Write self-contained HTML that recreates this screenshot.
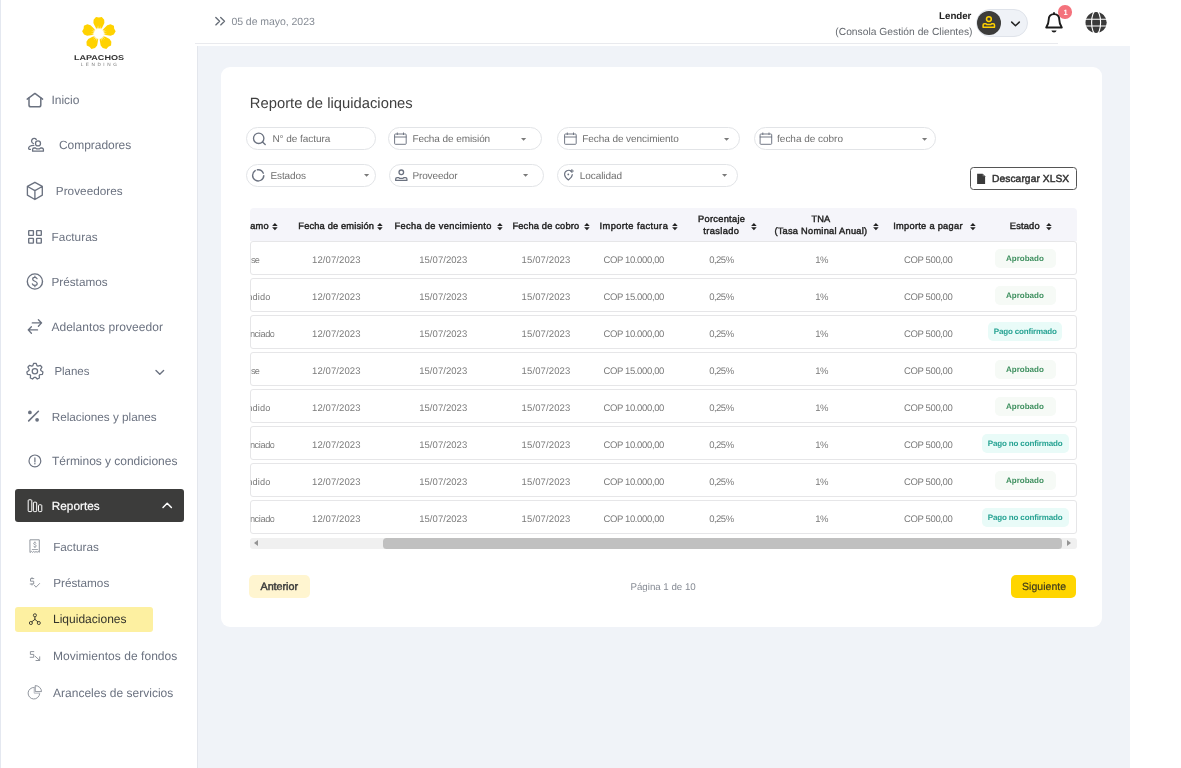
<!DOCTYPE html>
<html lang="es"><head><meta charset="utf-8"><title>Reporte de liquidaciones</title>
<style>
*{box-sizing:border-box;margin:0;padding:0}
html,body{width:1181px;height:768px;overflow:hidden;background:#fff;font-family:"Liberation Sans",sans-serif}
body{position:relative}
.t{position:absolute;white-space:pre;font-family:"Liberation Sans",sans-serif;text-rendering:geometricPrecision}
.a{position:absolute}
.pill{position:absolute;border:1px solid #e2e4e7;border-radius:11px;background:#fff;height:22px}
.row{position:absolute;left:250px;width:827px;height:34px;border:1px solid #e6e6e8;border-radius:3px;background:#fff}
.badge{position:absolute;border-radius:5px;height:19.2px}
svg{position:absolute;overflow:visible}
.tl{position:absolute;left:0;top:0;width:1181px;height:768px;will-change:transform}

</style></head>
<body>
<div class="a" style="left:197px;top:46px;width:933px;height:722px;background:#f0f3f8"></div>
<div class="a" style="left:197px;top:46px;width:1px;height:722px;background:#e3e6ec"></div>
<div class="a" style="left:0;top:0;width:1px;height:768px;background:#e4e8f0"></div>
<div class="a" style="left:195px;top:43px;width:863px;height:1px;background:#e9eaee"></div>
<div class="a" style="left:221px;top:67px;width:881px;height:560px;background:#fff;border-radius:9px"></div>
<div class="a" style="left:15px;top:489px;width:169px;height:33px;background:#3c3c3b;border-radius:3px"></div>
<div class="a" style="left:15px;top:607px;width:138px;height:25px;background:#fdf0a1;border-radius:3px"></div>
<div class="a" style="left:976px;top:9px;width:52px;height:28px;background:#eff2f7;border:1px solid #dfe3ea;border-radius:14px"></div>
<div class="a" style="left:977.1px;top:10.6px;width:24.3px;height:24.5px;background:#3c3c3a;border-radius:50%"></div>
<div class="a" style="left:1058.3px;top:5.3px;width:13.6px;height:13.6px;background:#f4727c;border-radius:50%"></div>
<div class="pill" style="left:246px;top:127px;width:129.5px;height:23px;border-radius:11.5px"></div>
<div class="pill" style="left:388.4px;top:127px;width:154px;height:23px;border-radius:11.5px"></div>
<div class="pill" style="left:557.4px;top:127px;width:182.4px;height:23px;border-radius:11.5px"></div>
<div class="pill" style="left:754px;top:127px;width:182.4px;height:23px;border-radius:11.5px"></div>
<div class="pill" style="left:246px;top:164px;width:129.5px;height:23px;border-radius:11.5px"></div>
<div class="pill" style="left:388.6px;top:164px;width:155px;height:23px;border-radius:11.5px"></div>
<div class="pill" style="left:556.5px;top:164px;width:181.4px;height:23px;border-radius:11.5px"></div>
<div class="a" style="left:970px;top:167px;width:107px;height:23px;border:1px solid #555;border-radius:3.5px;background:#fff"></div>
<div class="a" style="left:250px;top:208px;width:826.5px;height:33px;background:#f5f5fa;border-radius:4px 4px 0 0"></div>
<div class="row" style="top:241px"></div>
<div class="row" style="top:278px"></div>
<div class="row" style="top:315px"></div>
<div class="row" style="top:352px"></div>
<div class="row" style="top:389px"></div>
<div class="row" style="top:426px"></div>
<div class="row" style="top:463px"></div>
<div class="row" style="top:500px"></div>
<div class="badge" style="left:994.8px;top:248.6px;width:61.2px;background:#f6faf6"></div>
<div class="badge" style="left:994.8px;top:285.6px;width:61.2px;background:#f6faf6"></div>
<div class="badge" style="left:988.2px;top:321.6px;width:74.2px;background:#e9fbf8"></div>
<div class="badge" style="left:994.8px;top:359.6px;width:61.2px;background:#f6faf6"></div>
<div class="badge" style="left:994.8px;top:396.6px;width:61.2px;background:#f6faf6"></div>
<div class="badge" style="left:981.5px;top:433.6px;width:87.5px;background:#e9fbf8"></div>
<div class="badge" style="left:994.8px;top:470.6px;width:61.2px;background:#f6faf6"></div>
<div class="badge" style="left:981.5px;top:507.6px;width:87.5px;background:#e9fbf8"></div>
<div class="a" style="left:250px;top:537.6px;width:826.5px;height:11.4px;background:#f0f0f0;border-radius:3px"></div>
<div class="a" style="left:382.9px;top:537.6px;width:678.9px;height:11.4px;background:#c0c0c0;border-radius:3.5px"></div>
<div class="a" style="left:254.4px;top:540px;width:0;height:0;border-top:3.3px solid transparent;border-bottom:3.3px solid transparent;border-right:4.5px solid #949494"></div>
<div class="a" style="left:1066.9px;top:540px;width:0;height:0;border-top:3.3px solid transparent;border-bottom:3.3px solid transparent;border-left:4.5px solid #949494"></div>
<div class="a" style="left:249.2px;top:574.7px;width:60.8px;height:23.6px;background:#fff5d0;border-radius:5px"></div>
<div class="a" style="left:1011.3px;top:574.7px;width:65.2px;height:23.6px;background:#ffd500;border-radius:5px"></div>
<svg style="left:271.7px;top:222.9px" width="5.8" height="7.2" viewBox="0 0 5.8 7.2"><path d="M2.9 0 L5.7 3 L0.1 3Z M2.9 7.2 L5.7 4.2 L0.1 4.2Z" fill="#222"/></svg>
<svg style="left:377.4px;top:222.9px" width="5.8" height="7.2" viewBox="0 0 5.8 7.2"><path d="M2.9 0 L5.7 3 L0.1 3Z M2.9 7.2 L5.7 4.2 L0.1 4.2Z" fill="#222"/></svg>
<svg style="left:496.9px;top:222.9px" width="5.8" height="7.2" viewBox="0 0 5.8 7.2"><path d="M2.9 0 L5.7 3 L0.1 3Z M2.9 7.2 L5.7 4.2 L0.1 4.2Z" fill="#222"/></svg>
<svg style="left:584.2px;top:222.9px" width="5.8" height="7.2" viewBox="0 0 5.8 7.2"><path d="M2.9 0 L5.7 3 L0.1 3Z M2.9 7.2 L5.7 4.2 L0.1 4.2Z" fill="#222"/></svg>
<svg style="left:672.4px;top:222.9px" width="5.8" height="7.2" viewBox="0 0 5.8 7.2"><path d="M2.9 0 L5.7 3 L0.1 3Z M2.9 7.2 L5.7 4.2 L0.1 4.2Z" fill="#222"/></svg>
<svg style="left:751.1px;top:222.9px" width="5.8" height="7.2" viewBox="0 0 5.8 7.2"><path d="M2.9 0 L5.7 3 L0.1 3Z M2.9 7.2 L5.7 4.2 L0.1 4.2Z" fill="#222"/></svg>
<svg style="left:872.9px;top:222.9px" width="5.8" height="7.2" viewBox="0 0 5.8 7.2"><path d="M2.9 0 L5.7 3 L0.1 3Z M2.9 7.2 L5.7 4.2 L0.1 4.2Z" fill="#222"/></svg>
<svg style="left:970.0px;top:222.9px" width="5.8" height="7.2" viewBox="0 0 5.8 7.2"><path d="M2.9 0 L5.7 3 L0.1 3Z M2.9 7.2 L5.7 4.2 L0.1 4.2Z" fill="#222"/></svg>
<svg style="left:1046.3px;top:222.9px" width="5.8" height="7.2" viewBox="0 0 5.8 7.2"><path d="M2.9 0 L5.7 3 L0.1 3Z M2.9 7.2 L5.7 4.2 L0.1 4.2Z" fill="#222"/></svg>
<svg style="left:521.4px;top:137.9px" width="5.2" height="2.8" viewBox="0 0 5.2 2.8"><path d="M0 0 L5.2 0 L2.6 2.8Z" fill="#7a7a7a"/></svg>
<svg style="left:724.0px;top:137.9px" width="5.2" height="2.8" viewBox="0 0 5.2 2.8"><path d="M0 0 L5.2 0 L2.6 2.8Z" fill="#7a7a7a"/></svg>
<svg style="left:921.9px;top:137.9px" width="5.2" height="2.8" viewBox="0 0 5.2 2.8"><path d="M0 0 L5.2 0 L2.6 2.8Z" fill="#7a7a7a"/></svg>
<svg style="left:363.9px;top:174.3px" width="5.2" height="2.8" viewBox="0 0 5.2 2.8"><path d="M0 0 L5.2 0 L2.6 2.8Z" fill="#7a7a7a"/></svg>
<svg style="left:522.7px;top:174.3px" width="5.2" height="2.8" viewBox="0 0 5.2 2.8"><path d="M0 0 L5.2 0 L2.6 2.8Z" fill="#7a7a7a"/></svg>
<svg style="left:722.0px;top:174.3px" width="5.2" height="2.8" viewBox="0 0 5.2 2.8"><path d="M0 0 L5.2 0 L2.6 2.8Z" fill="#7a7a7a"/></svg>
<svg width="1181" height="768" viewBox="0 0 1181 768" style="left:0;top:0;pointer-events:none">
<polygon points="97.30,31.20 93.40,23.10 93.60,19.80 96.00,17.00 98.90,17.60 101.80,17.00 104.20,19.80 104.40,23.10 100.50,31.20" fill="#ffd200"/>
<polygon points="100.78,31.41 107.28,25.19 110.48,24.36 113.89,25.78 114.21,28.72 115.68,31.30 113.76,34.45 110.68,35.66 101.77,34.45" fill="#ffd200"/>
<polygon points="101.66,34.78 109.58,39.04 111.36,41.83 111.06,45.51 108.36,46.73 106.37,48.92 102.78,48.06 100.68,45.51 99.08,36.66" fill="#ffd200"/>
<polygon points="98.72,36.66 97.12,45.51 95.02,48.06 91.43,48.92 89.44,46.73 86.74,45.51 86.44,41.83 88.22,39.04 96.14,34.78" fill="#ffd200"/>
<polygon points="96.03,34.45 87.12,35.66 84.04,34.45 82.12,31.30 83.59,28.72 83.91,25.78 87.32,24.36 90.52,25.19 97.02,31.41" fill="#ffd200"/>
<defs><radialGradient id="lg"><stop offset="0" stop-color="#fff"/><stop offset="0.7" stop-color="#fff"/><stop offset="1" stop-color="#fff" stop-opacity="0"/></radialGradient></defs>
<circle cx="98.9" cy="33.7" r="6.2" fill="url(#lg)"/>
<polygon points="98.90,25.30 99.35,30.13 100.99,25.56 100.23,30.35 102.95,26.34 101.02,30.79 104.65,27.58 101.67,31.41 105.99,29.20 102.16,32.17 106.89,31.10 102.44,33.03 107.28,33.17 102.49,33.93 107.15,35.27 102.32,34.81 106.50,37.28 101.94,35.63 105.37,39.05 101.36,36.32 103.84,40.50 100.63,36.85 101.99,41.51 99.80,37.19 99.95,42.03 98.90,37.30 97.85,42.03 98.00,37.19 95.81,41.51 97.17,36.85 93.96,40.50 96.44,36.32 92.43,39.05 95.86,35.63 91.30,37.28 95.48,34.81 90.65,35.27 95.31,33.93 90.52,33.17 95.36,33.03 90.91,31.10 95.64,32.17 91.81,29.20 96.13,31.41 93.15,27.58 96.78,30.79 94.85,26.34 97.57,30.35 96.81,25.56 98.45,30.13" fill="#fff" opacity="0.8"/>
<path d="M27.2 99.1 L34.9 93.4 L42.6 99.1" fill="none" stroke="#6b7280" stroke-width="1.5" stroke-linecap="round" stroke-linejoin="round" />
<path d="M29.0 97.9 V104.9 a1.9 1.9 0 0 0 1.9 1.9 h8.0 a1.9 1.9 0 0 0 1.9 -1.9 V97.9" fill="none" stroke="#6b7280" stroke-width="1.5" stroke-linecap="round" stroke-linejoin="round" />
<circle cx="38" cy="143.4" r="2.5" fill="none" stroke="#6b7280" stroke-width="1.3"/>
<path d="M32.6 151.2 V149.6 a1.6 1.6 0 0 1 1.6 -1.6 h1.2 l1 .8 h3.2 l1 -.8 h1.2 a1.6 1.6 0 0 1 1.6 1.6 V151.2 Z" fill="none" stroke="#6b7280" stroke-width="1.3" stroke-linecap="round" stroke-linejoin="round" />
<path d="M36.3 139.5 A2.6 2.6 0 1 0 33.4 143.5" fill="none" stroke="#6b7280" stroke-width="1.3" stroke-linecap="round" stroke-linejoin="round" />
<path d="M33.8 145.4 C30.6 145.3 28.4 146.8 28.6 148.4 C28.7 149.3 29.6 149.6 30.4 149.3" fill="none" stroke="#6b7280" stroke-width="1.3" stroke-linecap="round" stroke-linejoin="round" />
<path d="M34.9 182.3 L42.3 186.4 V195.2 L34.9 199.5 L27.4 195.2 V186.4 Z M27.6 186.5 L34.9 190.6 L42.2 186.5 M34.9 190.6 V199.3" fill="none" stroke="#6b7280" stroke-width="1.35" stroke-linecap="round" stroke-linejoin="round" />
<rect x="28.7" y="230.6" width="4.7" height="4.7" rx="0.4" fill="none" stroke="#6b7280" stroke-width="1.35"/>
<rect x="36.6" y="230.6" width="4.7" height="4.7" rx="0.4" fill="none" stroke="#6b7280" stroke-width="1.35"/>
<rect x="28.7" y="238.4" width="4.7" height="4.7" rx="0.4" fill="none" stroke="#6b7280" stroke-width="1.35"/>
<rect x="36.6" y="238.4" width="4.7" height="4.7" rx="0.4" fill="none" stroke="#6b7280" stroke-width="1.35"/>
<circle cx="34.9" cy="281.5" r="7.6" fill="none" stroke="#6b7280" stroke-width="1.4"/>
<path d="M37.1 278.7 C36.6 277.7 35.7 277.4 34.8 277.4 C33.5 277.4 32.7 278.2 32.7 279.2 C32.7 281.6 37.2 280.9 37.2 283.5 C37.2 284.6 36.2 285.4 34.9 285.4 C33.8 285.4 32.8 284.9 32.4 283.9 M34.9 276.2 V277.4 M34.9 285.4 V286.7" fill="none" stroke="#6b7280" stroke-width="1.25" stroke-linecap="round" stroke-linejoin="round" />
<path d="M32.3 322.9 H41.2 M38.4 319.7 L41.6 322.9 L38.4 326.2" fill="none" stroke="#6b7280" stroke-width="1.35" stroke-linecap="round" stroke-linejoin="round" />
<path d="M37.5 329.9 H28.6 M31.4 326.7 L28.2 329.9 L31.4 333.2" fill="none" stroke="#6b7280" stroke-width="1.35" stroke-linecap="round" stroke-linejoin="round" />
<path d="M32.80 365.68 L33.68 363.29 L36.12 363.29 L37.00 365.68 L37.98 366.15 L40.40 365.36 L41.92 367.26 L40.60 369.44 L40.85 370.50 L42.98 371.90 L42.44 374.27 L39.91 374.60 L39.23 375.45 L39.47 377.99 L37.28 379.04 L35.45 377.28 L34.35 377.28 L32.52 379.04 L30.33 377.99 L30.57 375.45 L29.89 374.60 L27.36 374.27 L26.82 371.90 L28.95 370.50 L29.20 369.44 L27.88 367.26 L29.40 365.36 L31.82 366.15 Z" fill="none" stroke="#6b7280" stroke-width="1.25" stroke-linecap="round" stroke-linejoin="round" />
<circle cx="34.9" cy="371.3" r="2.7" fill="none" stroke="#6b7280" stroke-width="1.25"/>
<path d="M156 370.6 L159.8 374.3 L163.6 370.6" fill="none" stroke="#6b7280" stroke-width="1.4" stroke-linecap="round" stroke-linejoin="round" />
<path d="M28.7 420.9 L38.4 411.3" fill="none" stroke="#6b7280" stroke-width="1.6" stroke-linecap="round" stroke-linejoin="round" />
<circle cx="29.9" cy="412.4" r="1.85" fill="#6b7280" stroke="none" stroke-width="0"/>
<circle cx="37.1" cy="419.8" r="1.85" fill="#6b7280" stroke="none" stroke-width="0"/>
<circle cx="34.9" cy="460.9" r="5.9" fill="none" stroke="#6b7280" stroke-width="1.2"/>
<path d="M34.9 457.9 V462" fill="none" stroke="#6b7280" stroke-width="1.2" stroke-linecap="round" stroke-linejoin="round" />
<circle cx="34.9" cy="463.7" r="0.75" fill="#6b7280" stroke="none" stroke-width="0"/>
<rect x="28.2" y="499.8" width="3.6" height="11.8" rx="0.8" fill="none" stroke="#fff" stroke-width="1"/>
<rect x="33.4" y="502.2" width="3.3" height="9.4" rx="0.8" fill="none" stroke="#fff" stroke-width="1"/>
<rect x="38.5" y="504.8" width="3.3" height="6.8" rx="0.8" fill="none" stroke="#fff" stroke-width="1"/>
<path d="M163 507.5 L167.2 503.3 L171.4 507.5" fill="none" stroke="#fff" stroke-width="1.5" stroke-linecap="round" stroke-linejoin="round" />
<path d="M30.3 539.8 H39.3 V552.3 L38.2 551.4 L37.1 552.4 L36 551.4 L34.9 552.4 L33.7 551.4 L32.6 552.4 L31.5 551.4 L30.3 552.3 Z" fill="none" stroke="#8b9099" stroke-width="0.95" stroke-linecap="round" stroke-linejoin="round" />
<path d="M36.1 543.2 C35.6 542.4 33.5 542.3 33.6 543.6 C33.7 545 36.3 544.5 36.3 545.9 C36.3 547.2 34 547.2 33.5 546.2 M34.9 541.9 V542.5 M34.9 547 V547.6" fill="none" stroke="#8b9099" stroke-width="0.8" stroke-linecap="round" stroke-linejoin="round" />
<path d="M32.3 549.5 H37.5" fill="none" stroke="#8b9099" stroke-width="0.8" stroke-linecap="round" stroke-linejoin="round" />
<path d="M33.8 578.6 H30.5 V581.2 H33.7 V584 H30.2 M32 577.6 V578.6 M32 584 V585" fill="none" stroke="#8b9099" stroke-width="0.95" stroke-linecap="round" stroke-linejoin="round" />
<path d="M34.4 585.3 L36 587.2 L39.6 583.5" fill="none" stroke="#8b9099" stroke-width="0.9" stroke-linecap="round" stroke-linejoin="round" />
<circle cx="34.9" cy="615.3" r="1.55" fill="none" stroke="#3b3a2e" stroke-width="0.9"/>
<circle cx="30.9" cy="623" r="1.55" fill="none" stroke="#3b3a2e" stroke-width="0.9"/>
<circle cx="38.8" cy="623" r="1.55" fill="none" stroke="#3b3a2e" stroke-width="0.9"/>
<path d="M34.9 616.9 V619.4 M34.9 619.4 L31.8 621.8 M34.9 619.4 L37.9 621.8" fill="none" stroke="#3b3a2e" stroke-width="0.95" stroke-linecap="round" stroke-linejoin="round" />
<path d="M33.8 651.6 H30.4 V654.4 H33.7 V657.3 H30.2" fill="none" stroke="#8b9099" stroke-width="0.95" stroke-linecap="round" stroke-linejoin="round" />
<path d="M35 656.1 L39.5 660.3 M36 660.5 H39.7 V656.8" fill="none" stroke="#8b9099" stroke-width="0.95" stroke-linecap="round" stroke-linejoin="round" />
<path d="M34.2 687.4 A5.8 5.8 0 1 0 39.7 693.6" fill="none" stroke="#8b9099" stroke-width="0.95" stroke-linecap="round" stroke-linejoin="round" />
<path d="M34.2 687.6 V693.2 H39.6" fill="none" stroke="#b8bcc2" stroke-width="1.0" stroke-linecap="round" stroke-linejoin="round" />
<path d="M35.6 685.6 A6 6 0 0 1 41.5 691.6 H35.6 Z" fill="none" stroke="#8b9099" stroke-width="0.95" stroke-linecap="round" stroke-linejoin="round" />
<path d="M215.8 17.5 L219.6 21.2 L215.8 24.9 M220.7 17.5 L224.5 21.2 L220.7 24.9" fill="none" stroke="#666d77" stroke-width="1.35" stroke-linecap="round" stroke-linejoin="round" />
<circle cx="988.9" cy="19.1" r="2.4" fill="none" stroke="#ffd200" stroke-width="1.5"/>
<path d="M983.1 27.3 V25.1 a1.3 1.3 0 0 1 1.3 -1.3 h1.6 l.9 .8 h3.8 l.9 -.8 h1.6 a1.3 1.3 0 0 1 1.3 1.3 V27.3 Z" fill="none" stroke="#ffd200" stroke-width="1.5" stroke-linecap="round" stroke-linejoin="round" />
<path d="M1011.7 22.1 L1015.5 25.7 L1019.3 22.1" fill="none" stroke="#222" stroke-width="1.5" stroke-linecap="round" stroke-linejoin="round" />
<path d="M1054 14.1 C1050.2 14.1 1048.7 17 1048.7 19.8 C1048.7 23.6 1047.5 25.6 1046.2 27.5 H1061.8 C1060.5 25.6 1059.3 23.6 1059.3 19.8 C1059.3 17 1057.8 14.1 1054 14.1 Z" fill="none" stroke="#1c1c1c" stroke-width="1.9" stroke-linecap="round" stroke-linejoin="round" />
<path d="M1051.4 30.6 H1056.6 A2.7 2.7 0 0 1 1051.4 30.6 Z" fill="#1c1c1c"/>
<path d="M1054 12.9 V13.6" fill="none" stroke="#1c1c1c" stroke-width="1.9" stroke-linecap="round" stroke-linejoin="round" />
<circle cx="1096.1" cy="22.5" r="10.6" fill="#3a3a3a"/>
<g stroke="#fff" stroke-width="1.15" fill="none"><ellipse cx="1096.1" cy="22.5" rx="4.5" ry="11.799999999999999"/><path d="M1084.5 19.2 H1107.6999999999998 M1084.5 26.0 H1107.6999999999998"/></g>
<circle cx="258.7" cy="138.3" r="5.2" fill="none" stroke="#6b7280" stroke-width="1.35"/>
<path d="M262.5 142 L265.2 144.5" fill="none" stroke="#6b7280" stroke-width="1.4" stroke-linecap="round" stroke-linejoin="round" />
<rect x="394.6" y="134" width="11.6" height="10.3" rx="0.8" fill="none" stroke="#6b7280" stroke-width="0.95"/>
<path d="M394.6 137 H406.20000000000005 M397.3 132.9 V134.6 M403.5 132.9 V134.6" fill="none" stroke="#6b7280" stroke-width="0.95" stroke-linecap="round" stroke-linejoin="round" />
<rect x="564.6" y="134" width="11.6" height="10.3" rx="0.8" fill="none" stroke="#6b7280" stroke-width="0.95"/>
<path d="M564.6 137 H576.2 M567.3000000000001 132.9 V134.6 M573.5 132.9 V134.6" fill="none" stroke="#6b7280" stroke-width="0.95" stroke-linecap="round" stroke-linejoin="round" />
<rect x="760.1" y="134" width="11.6" height="10.3" rx="0.8" fill="none" stroke="#6b7280" stroke-width="0.95"/>
<path d="M760.1 137 H771.7 M762.8000000000001 132.9 V134.6 M769.0 132.9 V134.6" fill="none" stroke="#6b7280" stroke-width="0.95" stroke-linecap="round" stroke-linejoin="round" />
<path d="M255.2 170.6 A5.6 5.6 0 1 0 263.8 175.6" fill="none" stroke="#6b7280" stroke-width="1.4" stroke-linecap="round" stroke-linejoin="round" />
<path d="M257.4 169.8 A5.6 5.6 0 0 1 263.3 173.2" fill="none" stroke="#6b7280" stroke-width="1.4" stroke-linecap="round" stroke-linejoin="round" />
<circle cx="401.3" cy="172.3" r="2.3" fill="none" stroke="#6b7280" stroke-width="1.3"/>
<path d="M395.7 180.4 V179 a1.4 1.4 0 0 1 1.4 -1.4 h1.5 l.9 .7 h3.6 l.9 -.7 h1.5 a1.4 1.4 0 0 1 1.4 1.4 V180.4 Z" fill="none" stroke="#6b7280" stroke-width="1.3" stroke-linecap="round" stroke-linejoin="round" />
<path d="M571.3 171.4 A4 4 0 0 0 564.6 174.6 C564.6 177.2 568.4 180 568.4 180 C568.4 180 572.2 177.2 572.3 174.6" fill="none" stroke="#6b7280" stroke-width="1.15" stroke-linecap="round" stroke-linejoin="round" />
<circle cx="568.3" cy="174.4" r="0.9" fill="#6b7280" stroke="none" stroke-width="0"/>
<path d="M571.9 169.4 V172.4 M570.4 170.9 H573.4" fill="none" stroke="#6b7280" stroke-width="1.05" stroke-linecap="round" stroke-linejoin="round" />
<path d="M977.1 173.8 H982.6 L985.1 176.3 V183.9 H977.1 Z" fill="#3a3a3a"/>
<path d="M982.6 173.8 V176.3 H985.1 Z" fill="#777"/>
</svg>

<div class="tl">
<aside>
<div class="t" style="left:73.6px;top:54px;font-size:7px;line-height:10px;color:#333;font-weight:700;transform:scaleX(1.292);transform-origin:0.32px 50%;">LAPACHOS</div>
<div class="t" style="left:80.7px;top:62px;font-size:4.7px;line-height:6px;color:#777;letter-spacing:2.543px;">LENDING</div>
<div class="t" style="left:51.4px;top:92px;font-size:12.0px;line-height:16px;color:#6b7280;">Inicio</div>
<div class="t" style="left:59.0px;top:137px;font-size:12.0px;line-height:16px;color:#6b7280;letter-spacing:-0.050px;">Compradores</div>
<div class="t" style="left:55.8px;top:184px;font-size:11.75px;line-height:16px;color:#6b7280;letter-spacing:0.028px;">Proveedores</div>
<div class="t" style="left:51.6px;top:230px;font-size:11.75px;line-height:16px;color:#6b7280;letter-spacing:0.040px;">Facturas</div>
<div class="t" style="left:51.4px;top:275px;font-size:11.75px;line-height:16px;color:#6b7280;letter-spacing:0.016px;">Préstamos</div>
<div class="t" style="left:51.4px;top:319px;font-size:12.0px;line-height:16px;color:#6b7280;letter-spacing:0.042px;">Adelantos proveedor</div>
<div class="t" style="left:54.4px;top:364px;font-size:11.5px;line-height:16px;color:#6b7280;letter-spacing:-0.034px;">Planes</div>
<div class="t" style="left:51.7px;top:410px;font-size:11.75px;line-height:16px;color:#6b7280;letter-spacing:-0.015px;">Relaciones y planes</div>
<div class="t" style="left:52.0px;top:453px;font-size:12.0px;line-height:16px;color:#6b7280;letter-spacing:-0.032px;">Términos y condiciones</div>
<div class="t" style="left:51.7px;top:499px;font-size:11.75px;line-height:16px;color:#ffffff;letter-spacing:0.045px;-webkit-text-stroke:0.2px #fff;">Reportes</div>
<div class="t" style="left:53.2px;top:540px;font-size:11.75px;line-height:16px;color:#6b7280;letter-spacing:-0.017px;">Facturas</div>
<div class="t" style="left:53.2px;top:576px;font-size:11.75px;line-height:16px;color:#6b7280;letter-spacing:-0.009px;">Préstamos</div>
<div class="t" style="left:53.0px;top:611px;font-size:12.0px;line-height:16px;color:#33332b;letter-spacing:0.009px;">Liquidaciones</div>
<div class="t" style="left:53.0px;top:648px;font-size:12.0px;line-height:16px;color:#6b7280;letter-spacing:0.045px;">Movimientos de fondos</div>
<div class="t" style="left:53.0px;top:685px;font-size:12.0px;line-height:16px;color:#6b7280;letter-spacing:0.011px;">Aranceles de servicios</div>
</aside>
<header>
<div class="t" style="left:231.4px;top:15px;font-size:10.5px;line-height:14px;color:#868c95;letter-spacing:-0.044px;">05 de mayo, 2023</div>
<div class="t" style="left:939.1px;top:10px;font-size:9.75px;line-height:14px;color:#222;letter-spacing:-0.043px;font-weight:700;">Lender</div>
<div class="t" style="left:835.3px;top:26px;font-size:10.25px;line-height:14px;color:#666a70;letter-spacing:0.017px;">(Consola Gestión de Clientes)</div>
<div class="t" style="left:1063.5px;top:8px;font-size:7.5px;line-height:10px;color:#fff;font-weight:700;">1</div>
</header>
<main>
<div class="t" style="left:249.8px;top:94px;font-size:14.75px;line-height:20px;color:#404040;letter-spacing:0.024px;">Reporte de liquidaciones</div>
<div class="t" style="left:272.4px;top:133px;font-size:10px;line-height:14px;color:#6f6f6f;letter-spacing:-0.040px;">N° de factura</div>
<div class="t" style="left:412.4px;top:133px;font-size:10px;line-height:14px;color:#6f6f6f;letter-spacing:-0.076px;">Fecha de emisión</div>
<div class="t" style="left:582.2px;top:133px;font-size:10px;line-height:14px;color:#6f6f6f;letter-spacing:-0.060px;">Fecha de vencimiento</div>
<div class="t" style="left:777.1px;top:133px;font-size:10px;line-height:14px;color:#6f6f6f;letter-spacing:-0.021px;">fecha de cobro</div>
<div class="t" style="left:270.4px;top:170px;font-size:10px;line-height:14px;color:#6f6f6f;letter-spacing:-0.090px;">Estados</div>
<div class="t" style="left:412.4px;top:170px;font-size:10px;line-height:14px;color:#6f6f6f;letter-spacing:-0.118px;">Proveedor</div>
<div class="t" style="left:579.8px;top:170px;font-size:10px;line-height:14px;color:#6f6f6f;letter-spacing:-0.077px;">Localidad</div>
<div class="t" style="left:992.0px;top:173px;font-size:10.25px;line-height:14px;color:#333;letter-spacing:0.066px;-webkit-text-stroke:0.45px #333;">Descargar XLSX</div>
<div class="t" style="left:250.3px;top:220px;font-size:9.25px;line-height:12px;color:#222;letter-spacing:0.150px;-webkit-text-stroke:0.42px #222;">amo</div>
<div class="t" style="left:298.3px;top:220px;font-size:9.25px;line-height:12px;color:#222;letter-spacing:0.179px;-webkit-text-stroke:0.42px #222;">Fecha de emisión</div>
<div class="t" style="left:394.6px;top:220px;font-size:9.25px;line-height:12px;color:#222;letter-spacing:0.332px;-webkit-text-stroke:0.42px #222;">Fecha de vencimiento</div>
<div class="t" style="left:512.4px;top:220px;font-size:9.25px;line-height:12px;color:#222;letter-spacing:0.194px;-webkit-text-stroke:0.42px #222;">Fecha de cobro</div>
<div class="t" style="left:599.5px;top:220px;font-size:9.25px;line-height:12px;color:#222;letter-spacing:0.434px;-webkit-text-stroke:0.42px #222;">Importe factura</div>
<div class="t" style="left:698.0px;top:213px;font-size:9.25px;line-height:12px;color:#222;letter-spacing:0.296px;-webkit-text-stroke:0.42px #222;">Porcentaje</div>
<div class="t" style="left:703.2px;top:225px;font-size:9.25px;line-height:12px;color:#222;letter-spacing:0.411px;-webkit-text-stroke:0.42px #222;">traslado</div>
<div class="t" style="left:811.6px;top:213px;font-size:9.25px;line-height:12px;color:#222;letter-spacing:0.050px;-webkit-text-stroke:0.42px #222;">TNA</div>
<div class="t" style="left:774.4px;top:225px;font-size:9.25px;line-height:12px;color:#222;letter-spacing:0.251px;-webkit-text-stroke:0.42px #222;">(Tasa Nominal Anual)</div>
<div class="t" style="left:893.2px;top:220px;font-size:9.25px;line-height:12px;color:#222;letter-spacing:0.285px;-webkit-text-stroke:0.42px #222;">Importe a pagar</div>
<div class="t" style="left:1009.8px;top:220px;font-size:9.25px;line-height:12px;color:#222;letter-spacing:0.197px;-webkit-text-stroke:0.42px #222;">Estado</div>
<div class="t" style="left:250.9px;top:254px;font-size:9.25px;line-height:12px;color:#7b7b7b;letter-spacing:-0.700px;">se</div>
<div class="t" style="left:312.1px;top:255px;font-size:9.5px;line-height:12px;color:#7b7b7b;letter-spacing:0.095px;">12/07/2023</div>
<div class="t" style="left:419.2px;top:255px;font-size:9.5px;line-height:12px;color:#7b7b7b;letter-spacing:0.050px;">15/07/2023</div>
<div class="t" style="left:521.6px;top:255px;font-size:9.5px;line-height:12px;color:#7b7b7b;letter-spacing:0.128px;">15/07/2023</div>
<div class="t" style="left:603.4px;top:255px;font-size:9.5px;line-height:12px;color:#7b7b7b;letter-spacing:-0.361px;">COP 10.000,00</div>
<div class="t" style="left:709.2px;top:255px;font-size:9.5px;line-height:12px;color:#7b7b7b;letter-spacing:-0.509px;">0,25%</div>
<div class="t" style="left:815.3px;top:255px;font-size:9.5px;line-height:12px;color:#7b7b7b;letter-spacing:-0.700px;">1%</div>
<div class="t" style="left:904.0px;top:255px;font-size:9.5px;line-height:12px;color:#7b7b7b;letter-spacing:-0.369px;">COP 500,00</div>
<div class="t" style="left:1006.1px;top:254px;font-size:8px;line-height:10px;color:#3d8f5e;letter-spacing:-0.012px;font-weight:700;">Aprobado</div>
<div class="t" style="left:247.2px;top:291px;font-size:9.25px;line-height:12px;color:#7b7b7b;letter-spacing:0.165px;clip-path:inset(0 0 0 3.4px);">ndido</div>
<div class="t" style="left:312.1px;top:292px;font-size:9.5px;line-height:12px;color:#7b7b7b;letter-spacing:0.095px;">12/07/2023</div>
<div class="t" style="left:419.2px;top:292px;font-size:9.5px;line-height:12px;color:#7b7b7b;letter-spacing:0.050px;">15/07/2023</div>
<div class="t" style="left:521.6px;top:292px;font-size:9.5px;line-height:12px;color:#7b7b7b;letter-spacing:0.128px;">15/07/2023</div>
<div class="t" style="left:603.4px;top:292px;font-size:9.5px;line-height:12px;color:#7b7b7b;letter-spacing:-0.361px;">COP 15.000,00</div>
<div class="t" style="left:709.2px;top:292px;font-size:9.5px;line-height:12px;color:#7b7b7b;letter-spacing:-0.509px;">0,25%</div>
<div class="t" style="left:815.3px;top:292px;font-size:9.5px;line-height:12px;color:#7b7b7b;letter-spacing:-0.700px;">1%</div>
<div class="t" style="left:904.0px;top:292px;font-size:9.5px;line-height:12px;color:#7b7b7b;letter-spacing:-0.369px;">COP 500,00</div>
<div class="t" style="left:1006.1px;top:291px;font-size:8px;line-height:10px;color:#3d8f5e;letter-spacing:-0.012px;font-weight:700;">Aprobado</div>
<div class="t" style="left:249.9px;top:328px;font-size:9.25px;line-height:12px;color:#7b7b7b;letter-spacing:-0.433px;clip-path:inset(0 0 0 0.7px);">nciado</div>
<div class="t" style="left:312.1px;top:329px;font-size:9.5px;line-height:12px;color:#7b7b7b;letter-spacing:0.095px;">12/07/2023</div>
<div class="t" style="left:419.2px;top:329px;font-size:9.5px;line-height:12px;color:#7b7b7b;letter-spacing:0.050px;">15/07/2023</div>
<div class="t" style="left:521.6px;top:329px;font-size:9.5px;line-height:12px;color:#7b7b7b;letter-spacing:0.128px;">15/07/2023</div>
<div class="t" style="left:603.4px;top:329px;font-size:9.5px;line-height:12px;color:#7b7b7b;letter-spacing:-0.361px;">COP 10.000,00</div>
<div class="t" style="left:709.2px;top:329px;font-size:9.5px;line-height:12px;color:#7b7b7b;letter-spacing:-0.509px;">0,25%</div>
<div class="t" style="left:815.3px;top:329px;font-size:9.5px;line-height:12px;color:#7b7b7b;letter-spacing:-0.700px;">1%</div>
<div class="t" style="left:904.0px;top:329px;font-size:9.5px;line-height:12px;color:#7b7b7b;letter-spacing:-0.369px;">COP 500,00</div>
<div class="t" style="left:993.8px;top:327px;font-size:8px;line-height:10px;color:#25a292;letter-spacing:-0.167px;font-weight:700;">Pago confirmado</div>
<div class="t" style="left:250.9px;top:365px;font-size:9.25px;line-height:12px;color:#7b7b7b;letter-spacing:-0.700px;">se</div>
<div class="t" style="left:312.1px;top:366px;font-size:9.5px;line-height:12px;color:#7b7b7b;letter-spacing:0.095px;">12/07/2023</div>
<div class="t" style="left:419.2px;top:366px;font-size:9.5px;line-height:12px;color:#7b7b7b;letter-spacing:0.050px;">15/07/2023</div>
<div class="t" style="left:521.6px;top:366px;font-size:9.5px;line-height:12px;color:#7b7b7b;letter-spacing:0.128px;">15/07/2023</div>
<div class="t" style="left:603.4px;top:366px;font-size:9.5px;line-height:12px;color:#7b7b7b;letter-spacing:-0.361px;">COP 15.000,00</div>
<div class="t" style="left:709.2px;top:366px;font-size:9.5px;line-height:12px;color:#7b7b7b;letter-spacing:-0.509px;">0,25%</div>
<div class="t" style="left:815.3px;top:366px;font-size:9.5px;line-height:12px;color:#7b7b7b;letter-spacing:-0.700px;">1%</div>
<div class="t" style="left:904.0px;top:366px;font-size:9.5px;line-height:12px;color:#7b7b7b;letter-spacing:-0.369px;">COP 500,00</div>
<div class="t" style="left:1006.1px;top:365px;font-size:8px;line-height:10px;color:#3d8f5e;letter-spacing:-0.012px;font-weight:700;">Aprobado</div>
<div class="t" style="left:247.2px;top:402px;font-size:9.25px;line-height:12px;color:#7b7b7b;letter-spacing:0.165px;clip-path:inset(0 0 0 3.4px);">ndido</div>
<div class="t" style="left:312.1px;top:403px;font-size:9.5px;line-height:12px;color:#7b7b7b;letter-spacing:0.095px;">12/07/2023</div>
<div class="t" style="left:419.2px;top:403px;font-size:9.5px;line-height:12px;color:#7b7b7b;letter-spacing:0.050px;">15/07/2023</div>
<div class="t" style="left:521.6px;top:403px;font-size:9.5px;line-height:12px;color:#7b7b7b;letter-spacing:0.128px;">15/07/2023</div>
<div class="t" style="left:603.4px;top:403px;font-size:9.5px;line-height:12px;color:#7b7b7b;letter-spacing:-0.361px;">COP 10.000,00</div>
<div class="t" style="left:709.2px;top:403px;font-size:9.5px;line-height:12px;color:#7b7b7b;letter-spacing:-0.509px;">0,25%</div>
<div class="t" style="left:815.3px;top:403px;font-size:9.5px;line-height:12px;color:#7b7b7b;letter-spacing:-0.700px;">1%</div>
<div class="t" style="left:904.0px;top:403px;font-size:9.5px;line-height:12px;color:#7b7b7b;letter-spacing:-0.369px;">COP 500,00</div>
<div class="t" style="left:1006.1px;top:402px;font-size:8px;line-height:10px;color:#3d8f5e;letter-spacing:-0.012px;font-weight:700;">Aprobado</div>
<div class="t" style="left:249.9px;top:439px;font-size:9.25px;line-height:12px;color:#7b7b7b;letter-spacing:-0.433px;clip-path:inset(0 0 0 0.7px);">nciado</div>
<div class="t" style="left:312.1px;top:440px;font-size:9.5px;line-height:12px;color:#7b7b7b;letter-spacing:0.095px;">12/07/2023</div>
<div class="t" style="left:419.2px;top:440px;font-size:9.5px;line-height:12px;color:#7b7b7b;letter-spacing:0.050px;">15/07/2023</div>
<div class="t" style="left:521.6px;top:440px;font-size:9.5px;line-height:12px;color:#7b7b7b;letter-spacing:0.128px;">15/07/2023</div>
<div class="t" style="left:603.4px;top:440px;font-size:9.5px;line-height:12px;color:#7b7b7b;letter-spacing:-0.361px;">COP 10.000,00</div>
<div class="t" style="left:709.2px;top:440px;font-size:9.5px;line-height:12px;color:#7b7b7b;letter-spacing:-0.509px;">0,25%</div>
<div class="t" style="left:815.3px;top:440px;font-size:9.5px;line-height:12px;color:#7b7b7b;letter-spacing:-0.700px;">1%</div>
<div class="t" style="left:904.0px;top:440px;font-size:9.5px;line-height:12px;color:#7b7b7b;letter-spacing:-0.369px;">COP 500,00</div>
<div class="t" style="left:987.8px;top:439px;font-size:8px;line-height:10px;color:#25a292;letter-spacing:-0.150px;font-weight:700;">Pago no confirmado</div>
<div class="t" style="left:247.2px;top:476px;font-size:9.25px;line-height:12px;color:#7b7b7b;letter-spacing:0.165px;clip-path:inset(0 0 0 3.4px);">ndido</div>
<div class="t" style="left:312.1px;top:477px;font-size:9.5px;line-height:12px;color:#7b7b7b;letter-spacing:0.095px;">12/07/2023</div>
<div class="t" style="left:419.2px;top:477px;font-size:9.5px;line-height:12px;color:#7b7b7b;letter-spacing:0.050px;">15/07/2023</div>
<div class="t" style="left:521.6px;top:477px;font-size:9.5px;line-height:12px;color:#7b7b7b;letter-spacing:0.128px;">15/07/2023</div>
<div class="t" style="left:603.4px;top:477px;font-size:9.5px;line-height:12px;color:#7b7b7b;letter-spacing:-0.361px;">COP 10.000,00</div>
<div class="t" style="left:709.2px;top:477px;font-size:9.5px;line-height:12px;color:#7b7b7b;letter-spacing:-0.509px;">0,25%</div>
<div class="t" style="left:815.3px;top:477px;font-size:9.5px;line-height:12px;color:#7b7b7b;letter-spacing:-0.700px;">1%</div>
<div class="t" style="left:904.0px;top:477px;font-size:9.5px;line-height:12px;color:#7b7b7b;letter-spacing:-0.369px;">COP 500,00</div>
<div class="t" style="left:1006.1px;top:476px;font-size:8px;line-height:10px;color:#3d8f5e;letter-spacing:-0.012px;font-weight:700;">Aprobado</div>
<div class="t" style="left:249.9px;top:513px;font-size:9.25px;line-height:12px;color:#7b7b7b;letter-spacing:-0.433px;clip-path:inset(0 0 0 0.7px);">nciado</div>
<div class="t" style="left:312.1px;top:514px;font-size:9.5px;line-height:12px;color:#7b7b7b;letter-spacing:0.095px;">12/07/2023</div>
<div class="t" style="left:419.2px;top:514px;font-size:9.5px;line-height:12px;color:#7b7b7b;letter-spacing:0.050px;">15/07/2023</div>
<div class="t" style="left:521.6px;top:514px;font-size:9.5px;line-height:12px;color:#7b7b7b;letter-spacing:0.128px;">15/07/2023</div>
<div class="t" style="left:603.4px;top:514px;font-size:9.5px;line-height:12px;color:#7b7b7b;letter-spacing:-0.361px;">COP 10.000,00</div>
<div class="t" style="left:709.2px;top:514px;font-size:9.5px;line-height:12px;color:#7b7b7b;letter-spacing:-0.509px;">0,25%</div>
<div class="t" style="left:815.3px;top:514px;font-size:9.5px;line-height:12px;color:#7b7b7b;letter-spacing:-0.700px;">1%</div>
<div class="t" style="left:904.0px;top:514px;font-size:9.5px;line-height:12px;color:#7b7b7b;letter-spacing:-0.369px;">COP 500,00</div>
<div class="t" style="left:987.8px;top:513px;font-size:8px;line-height:10px;color:#25a292;letter-spacing:-0.150px;font-weight:700;">Pago no confirmado</div>
<div class="t" style="left:260.5px;top:580px;font-size:10.75px;line-height:14px;color:#3a3a3a;letter-spacing:-0.022px;-webkit-text-stroke:0.45px #3a3a3a;">Anterior</div>
<div class="t" style="left:630.5px;top:581px;font-size:9.75px;line-height:14px;color:#868b94;letter-spacing:-0.031px;">Página 1 de 10</div>
<div class="t" style="left:1022.1px;top:580px;font-size:10.5px;line-height:14px;color:#3f3b1c;letter-spacing:0.025px;-webkit-text-stroke:0.2px #3f3b1c;">Siguiente</div>
</main>
</div>
</body></html>
